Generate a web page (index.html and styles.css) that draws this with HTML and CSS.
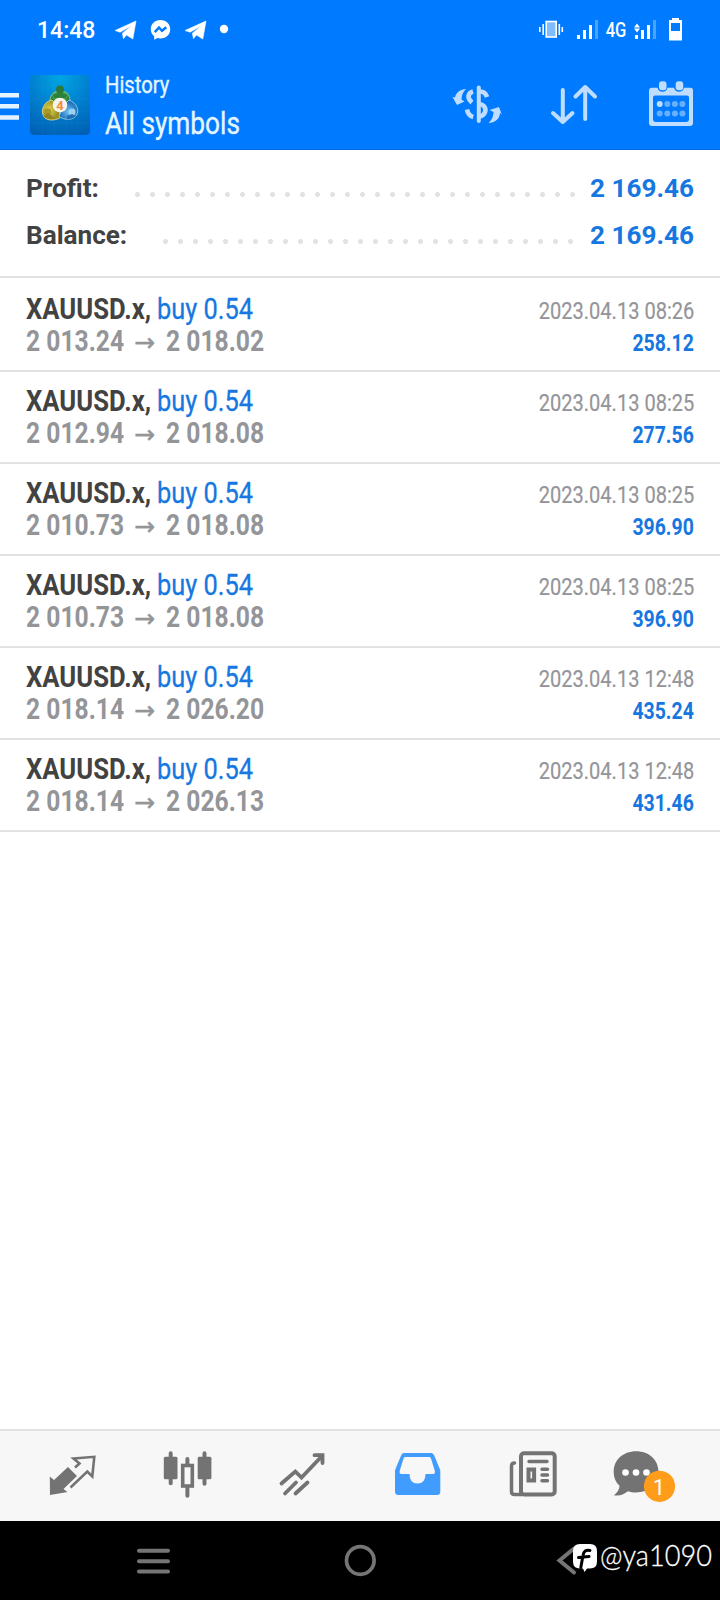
FILE: index.html
```html
<!DOCTYPE html>
<html lang="en">
<head>
<meta charset="utf-8">
<title>History</title>
<link rel="stylesheet" href="styles.css">
</head>
<body>
<div class="screen">
  <div class="status">
    <span class="clock">14:48</span>
    <svg class="notifs" viewBox="112 15 120 30" width="120" height="30">
      <g fill="#fff">
        <path id="plane" d="M115 30.500 136 21 132.800 39 126.500 35 123.500 38.600 122.300 33.200 132 25.500 120 32.200Z" stroke="#fff" stroke-width=".6" stroke-linejoin="round"/>
        <use href="#plane" x="70"/>
        <path d="M160.500 20c-5.700 0-9.700 4-9.700 9.200 0 3 1.300 5.400 3.400 7v3.600l3.300-1.800c1 .300 2 .400 3 .400 5.700 0 9.700-4 9.700-9.200S166.200 20 160.500 20Z"/>
        <circle cx="224" cy="29" r="4.200"/>
      </g>
      <path d="M154.800 32.200 159 27.500 162 30.800 166.300 27.300" fill="none" stroke="#007aff" stroke-width="2.500"/>
    </svg>
    <svg class="vibrate" viewBox="538 15 66 30" width="66" height="30">
      <rect x="546.200" y="21.500" width="10" height="15.500" fill="#80bdff" stroke="#fff" stroke-width="1.600"/>
      <path d="M543.200 24v11M539.800 27v5M559.300 24v11M562.300 27v5" stroke="#fff" stroke-width="1.600"/>
      <path d="M578.500 39v-4M584.500 39V30M590.500 39V25" stroke="#fff" stroke-width="3"/>
      <path d="M596.500 39V20" stroke="#4da2ff" stroke-width="3"/>
    </svg>
    <span class="net">4G</span>
    <svg class="signal" viewBox="632 15 55 30" width="55" height="30">
      <path d="M636.500 39v-4M642.500 39V30M648.500 39V25" stroke="#fff" stroke-width="3"/>
      <path d="M654.500 39V20" stroke="#4da2ff" stroke-width="3"/>
      <path d="M634 27.500h6L637 23.500ZM634 28.500h6L637 32.500Z" fill="#fff"/>
      <path d="M669 20h3v-2h7v2h3v20.500h-13ZM671 23v8h9V23Z" fill="#fff" fill-rule="evenodd"/>
    </svg>
  </div>
  <header class="appbar">
    <svg class="menu" viewBox="0 75 19 60" width="19" height="60"><path d="M0 95.200h19M0 106.300h19M0 117.500h19" stroke="#e3f3ff" stroke-width="4.600"/></svg>
    <svg class="logo" viewBox="0 0 60 60" width="60" height="60">
      <defs>
        <radialGradient id="lb" cx=".5" cy=".05" r="1"><stop offset="0" stop-color="#00a5e2"/><stop offset=".5" stop-color="#007fcf"/><stop offset="1" stop-color="#0061b4"/></radialGradient>
        <radialGradient id="lg" cy=".3"><stop offset="0" stop-color="#7ccb67"/><stop offset="1" stop-color="#267d39"/></radialGradient>
        <radialGradient id="ly" cx=".35"><stop offset="0" stop-color="#e6d850"/><stop offset="1" stop-color="#9c9024"/></radialGradient>
        <radialGradient id="lu" cy=".6"><stop offset="0" stop-color="#6fbff0"/><stop offset="1" stop-color="#1c6fb8"/></radialGradient>
      </defs>
      <rect width="60" height="60" rx="4" fill="url(#lb)"/>
      <path d="M0 12h60M0 24h60M0 36h60M0 48h60M12 0v60M24 0v60M36 0v60M48 0v60" stroke="#fff" stroke-opacity=".03"/>
      <path d="M30 16C20 16 18 26 22 31L38 31C42 25 40 16 30 16Z" fill="url(#lg)" stroke="#9fd08a" stroke-width=".8"/>
      <path d="M22 25C14 26 10 36 14 42 18 47 28 45 31 42L27 30Z" fill="url(#ly)" stroke="#e6e08c" stroke-width=".8"/>
      <path d="M39 25C47 28 50 36 46 41 42 46 33 45 29 41L34 30Z" fill="url(#lu)" stroke="#a5d4f0" stroke-width=".8"/>
      <circle cx="30" cy="14.500" r="4" fill="#2d7a38"/><path d="M23 20 30 17 37 20 35 23H25Z" fill="#2d803c"/>
      <circle cx="17.500" cy="37" r="3.800" fill="#a99a28"/><path d="M13 41 18 38 25 43Q18 46 13 41Z" fill="#8f8424"/>
      <circle cx="42" cy="37" r="3.500" fill="#9bd2f4"/><path d="M37 41 42 39 46 41Q42 45 37 44Z" fill="#1f6fb5"/>
      <circle cx="30" cy="30" r="7.300" fill="#f6f3ed"/>
      <text x="30" y="34.700" text-anchor="middle" class="logo-num">4</text>
    </svg>
    <div class="titles">
      <div class="t-small"><span>History</span></div>
      <div class="t-big"><span>All symbols</span></div>
    </div>
    <div class="actions">
      <svg viewBox="448 79 60 52" width="60" height="52">
        <g fill="none" stroke="#bfdeff" stroke-width="4.600">
          <path d="M478.800 87.500V121" stroke-width="4" stroke-linecap="round"/>
          <path d="M480 91.500c3.500 0 6 2 7 5.500"/>
          <path d="M473 91.500c-5 1.500-6.500 6.500-1 11"/>
          <path d="M479 104c5 .500 7.500 4 6 8.300-.900 2.500-3 4-6 4.200"/>
          <path d="M467 109.500c.700 4 2.500 6.500 6.200 7.500"/>
        </g>
        <path d="M466 89C460.500 89 455.500 93 455 97.500L452.500 97 457 105 464.500 101.500 461.500 99.500C461.500 95 463 92 466 89ZM488.500 123C495 123 500 118.500 500 112.500L502 115 499 107 489.500 110 493.500 112C493.500 116 492 120 488.500 123Z" fill="#bfdeff"/>
      </svg>
      <svg viewBox="547 79 54 52" width="54" height="52">
        <path d="M562.800 90V122M553 113 562.800 122 572.500 113M585.200 119V87M575.500 96.500 585.200 87 595 96.500" fill="none" stroke="#bfdeff" stroke-width="4" stroke-linecap="round" stroke-linejoin="round"/>
      </svg>
      <svg viewBox="645 79 52 52" width="52" height="52">
        <path d="M652 87.800h5.500q1 4 5 4t5-4h6.500q1 4 5 4t5-4h6.500q2.500 0 2.500 2.500V123q0 3-3 3H652q-3 0-3-3V90.800q0-3 3-3ZM655 95.500q-2 0-2 2V119q0 3 3 3h30q3 0 3-3V97.500q0-2-2-2Z" fill="#bfdeff" fill-rule="evenodd"/>
        <rect x="659" y="81.300" width="7.500" height="9" rx="3" fill="#bfdeff"/><rect x="675.700" y="81.300" width="7.500" height="9" rx="3" fill="#bfdeff"/>
        <g fill="#66b0ff"><circle cx="667.300" cy="104" r="3"/><circle cx="674.900" cy="104" r="3"/><circle cx="682.400" cy="104" r="3"/><circle cx="659.700" cy="113.500" r="3"/><circle cx="667.300" cy="113.500" r="3"/><circle cx="674.900" cy="113.500" r="3"/><circle cx="682.400" cy="113.500" r="3"/></g>
        <circle cx="659.700" cy="104" r="3" fill="#bfdeff"/>
      </svg>
    </div>
  </header>
  <section class="summary">
    <div class="sum profit"><b class="lbl">Profit:</b><i class="dots"></i><b class="val">2 169.46</b></div>
    <div class="sum balance"><b class="lbl">Balance:</b><i class="dots"></i><b class="val">2 169.46</b></div>
  </section>
  <main class="deals">
    <div class="deal">
      <div class="line"><b class="sym">XAUUSD.x,</b><span class="side">buy 0.54</span><span class="date">2023.04.13 08:26</span></div>
      <div class="line"><b class="px">2 013.24</b><span class="arr">→</span><b class="px">2 018.02</b><b class="gain">258.12</b></div>
    </div>
    <div class="deal">
      <div class="line"><b class="sym">XAUUSD.x,</b><span class="side">buy 0.54</span><span class="date">2023.04.13 08:25</span></div>
      <div class="line"><b class="px">2 012.94</b><span class="arr">→</span><b class="px">2 018.08</b><b class="gain">277.56</b></div>
    </div>
    <div class="deal">
      <div class="line"><b class="sym">XAUUSD.x,</b><span class="side">buy 0.54</span><span class="date">2023.04.13 08:25</span></div>
      <div class="line"><b class="px">2 010.73</b><span class="arr">→</span><b class="px">2 018.08</b><b class="gain">396.90</b></div>
    </div>
    <div class="deal">
      <div class="line"><b class="sym">XAUUSD.x,</b><span class="side">buy 0.54</span><span class="date">2023.04.13 08:25</span></div>
      <div class="line"><b class="px">2 010.73</b><span class="arr">→</span><b class="px">2 018.08</b><b class="gain">396.90</b></div>
    </div>
    <div class="deal">
      <div class="line"><b class="sym">XAUUSD.x,</b><span class="side">buy 0.54</span><span class="date">2023.04.13 12:48</span></div>
      <div class="line"><b class="px">2 018.14</b><span class="arr">→</span><b class="px">2 026.20</b><b class="gain">435.24</b></div>
    </div>
    <div class="deal">
      <div class="line"><b class="sym">XAUUSD.x,</b><span class="side">buy 0.54</span><span class="date">2023.04.13 12:48</span></div>
      <div class="line"><b class="px">2 018.14</b><span class="arr">→</span><b class="px">2 026.13</b><b class="gain">431.46</b></div>
    </div>
  </main>
  <nav class="tabs">
    <svg viewBox="42 1444 60 60" width="60" height="60">
      <path d="M49.800 1476.500 54 1480 68 1467 77 1476 63.500 1489 67.500 1492 50 1495Z" fill="#737373"/>
      <path d="M75 1467.500 79.500 1463.500 73.500 1458.500 94.300 1456.800 92.300 1476.500 87.300 1471.500 70.500 1487.500" fill="none" stroke="#737373" stroke-width="2.600"/>
    </svg>
    <svg viewBox="157 1444 60 60" width="60" height="60">
      <g fill="#737373"><rect x="163.800" y="1456.800" width="13.700" height="22.500" rx="1.500"/><rect x="197.700" y="1456.800" width="13.700" height="22.500" rx="1.500"/></g>
      <path d="M170.700 1453.300v30M204.500 1453.300v30.500M187.400 1459v5M187.400 1488v7.800" stroke="#737373" stroke-width="4" stroke-linecap="round"/>
      <rect x="182.700" y="1465.500" width="9.600" height="20.500" fill="none" stroke="#737373" stroke-width="3.600"/>
    </svg>
    <svg viewBox="272 1444 60 60" width="60" height="60">
      <path d="M281.500 1483.500 295.300 1471.500 301.500 1477.500 322.500 1455.500M314.500 1455.200H322.500V1463M285 1493.500 296 1482.500M295.500 1493.500 307.500 1482.500" fill="none" stroke="#737373" stroke-width="3.800" stroke-linecap="round"/>
    </svg>
    <svg viewBox="387 1444 60 60" width="60" height="60">
      <path d="M404 1453h27q2 0 3 2l5 12q1.300 2.500 1.300 5v19.500q0 3.500-3.500 3.500H398.500q-3.500 0-3.500-3.500V1472q0-2.500 1.300-5l5-12q.800-2 2.700-2ZM405 1457q-1 0-1.500 1.500l-3.700 12q-.800 3.500 1.700 3.500h8q0 9.500 8 9.500t8-9.500h7.500q2.500 0 1.700-3.500l-3.700-12q-.500-1.500-1.500-1.500Z" fill="#409cff" fill-rule="evenodd"/>
    </svg>
    <svg viewBox="502 1444 60 60" width="60" height="60">
      <g fill="none" stroke="#737373" stroke-width="4" stroke-linecap="round">
        <rect x="521" y="1453.300" width="33.700" height="41.200" rx="3"/>
        <path d="M514.500 1463q-3 0-3 3v25.500q0 3 3 3H522M529 1461.600h18M542 1469.200h5.500M542 1475h5.500M542 1480.700h5.500" stroke-width="3.500"/>
        <rect x="528.500" y="1469.500" width="5.600" height="11" stroke-width="4"/>
      </g>
    </svg>
    <svg viewBox="606 1444 70 60" width="70" height="60" class="chat">
      <path d="M636 1451.300c-13 0-22.300 8.700-22.300 20.500 0 6.500 2.500 11 5.800 13.800 0 4-2 7-5.500 9.600 5.500 1.500 10.500-1.500 14-4 2.500.800 5 1.300 8 1.300 13 0 22.500-8.700 22.500-20.700S649 1451.300 636 1451.300Z" fill="#737373"/>
      <g fill="#fff"><circle cx="625.500" cy="1472.500" r="3.300"/><circle cx="636" cy="1472.500" r="3.300"/><circle cx="646.500" cy="1472.500" r="3.300"/></g>
      <circle cx="659.500" cy="1486.300" r="15.600" fill="#ff9c1a"/>
      <text x="659" y="1494.500" text-anchor="middle" class="badge">1</text>
    </svg>
  </nav>
  <footer class="sysnav">
    <svg class="sys-menu" viewBox="137 1540 34 40" width="34" height="40"><path d="M139 1550.800h29M139 1561.300h29M139 1571.500h29" stroke="#757575" stroke-width="4" stroke-linecap="round"/></svg>
    <svg class="sys-home" viewBox="342 1540 36 40" width="36" height="40"><circle cx="360.300" cy="1560.500" r="13.800" fill="none" stroke="#757575" stroke-width="3.700"/></svg>
    <svg class="sys-back" viewBox="555 1540 44 40" width="44" height="40">
      <path d="M574 1548.500 559.500 1560.500 574 1572.500" fill="none" stroke="#757575" stroke-width="4" stroke-linecap="round"/>
      <path d="M580 1544h10q7 0 7 7v10.500q0 7-7 7h-3l-2.500 3.500-1.500-3.500h-3q-7 0-7-7V1551q0-7 7-7Z" fill="#fff"/>
      <path d="M590 1550.500q-6-1.500-7 5l-2.200 12M578.500 1557.500 589 1556.500" fill="none" stroke="#000" stroke-width="3" stroke-linecap="round"/>
    </svg>
    <span class="handle">@ya1090</span>
  </footer>
</div>
</body>
</html>
```
FILE: styles.css
```css
* { box-sizing: border-box; }
body { margin: 0; font-family: Roboto, "Liberation Sans", sans-serif; background: #fff; }
svg { display: block; flex: none; }
.screen { width: 720px; height: 1600px; display: flex; flex-direction: column; overflow: hidden; }
span, b { white-space: nowrap; }

/* status bar */
.status { height: 60px; background: #007aff; color: #fff; display: flex; align-items: center; padding: 0 33px 0 37px; }
.clock { font-size: 23px; font-weight: 500; width: 75px; line-height: 30px; padding-top: 1px; }
.vibrate { margin-left: auto; }
.net { font-size: 20px; font-weight: 500; width: 28px; padding-left: 2px; transform: scaleX(.83); transform-origin: left; }

/* app bar */
.appbar { height: 90px; background: #007aff; border-bottom: 1px solid #0069d9; display: flex; align-items: flex-start; padding: 15px 23px 0 0; color: #e6f6ff; }
.logo { margin-left: 11px; }
.logo-num { font: bold 13px Roboto, sans-serif; fill: #f08c3c; }
.titles { margin-left: 15px; }
.titles span { display: inline-block; transform-origin: left; -webkit-text-stroke: .35px #e6f6ff; }
.t-small { font-size: 23.5px; line-height: 20px; height: 27px; }
.t-small span { transform: scaleX(.86); }
.t-big { font-size: 32px; line-height: 43px; }
.t-big span { transform: scaleX(.82); }
.actions { margin-left: auto; display: flex; padding-top: 4px; }
.actions svg + svg { margin-left: 39px; }
.actions svg:last-child { margin-left: 44px; }

/* totals */
.summary { height: 128px; padding: 16px 26px 0; border-bottom: 2px solid #e2e2e4; }
.sum { display: flex; height: 47px; line-height: 44px; font-size: 26.5px; color: #424242; }
.sum b { display: block; transform-origin: left; font-weight: 700; }
.lbl { transform: scaleX(.985); }
.profit .lbl { width: 104px; }
.balance .lbl { width: 132px; }
.dots { flex: 1; background: radial-gradient(circle at 7.5px 28.5px, #e2e2e2 2.1px, transparent 2.9px) 0 0 / 15px 47px repeat-x; margin-right: 8px; }
.val { color: #1777e0; width: 106px; text-align: right; }
.sum .val { transform: scaleX(.985); transform-origin: right; }

/* deals */
.deal { height: 92px; padding: 13px 26px 0; border-bottom: 2px solid #e2e2e4; }
.deal:first-child { height: 94px; padding-top: 15px; }
.line { display: flex; height: 32px; line-height: 32px; font-size: 29px; align-items: baseline; }
.line > * { display: block; transform-origin: left; }
.sym { color: #424242; width: 131px; transform: scaleX(.885); }
.side { color: #1777e0; transform: scaleX(.875); -webkit-text-stroke: .3px #1777e0; }
.px { color: #949599; width: 98px; transform: scaleX(.85); }
.arr { color: #949599; width: 42px; padding-left: 10px; font: 25px/32px "DejaVu Sans", sans-serif; -webkit-text-stroke: .4px #949599; }
.line .date, .line .gain { margin-left: auto; transform-origin: right; font-size: 24px; }
.line .date { color: #949599; transform: scaleX(.835); -webkit-text-stroke: .2px #949599; }
.line .gain { color: #1777e0; transform: scaleX(.81); }

/* bottom tabs */
.tabs { margin-top: auto; height: 92px; background: #f7f7f7; border-top: 2px solid #e2e2e4; padding: 13px 0 0 42px; display: flex; gap: 55px; }
.tabs .chat { margin-left: -11px; }
.badge { font: 22px Roboto, sans-serif; fill: #fff; }

/* system navigation */
.sysnav { height: 79px; background: #000; display: flex; padding: 19px 0 0 137px; }
.sys-home { margin-left: 171px; }
.sys-back { margin-left: 177px; }
.handle { color: #fff; font: 300 29px/30px Lato, sans-serif; margin-left: 1px; transform: scaleX(.935); transform-origin: left; -webkit-text-stroke: .3px #fff; }
```
